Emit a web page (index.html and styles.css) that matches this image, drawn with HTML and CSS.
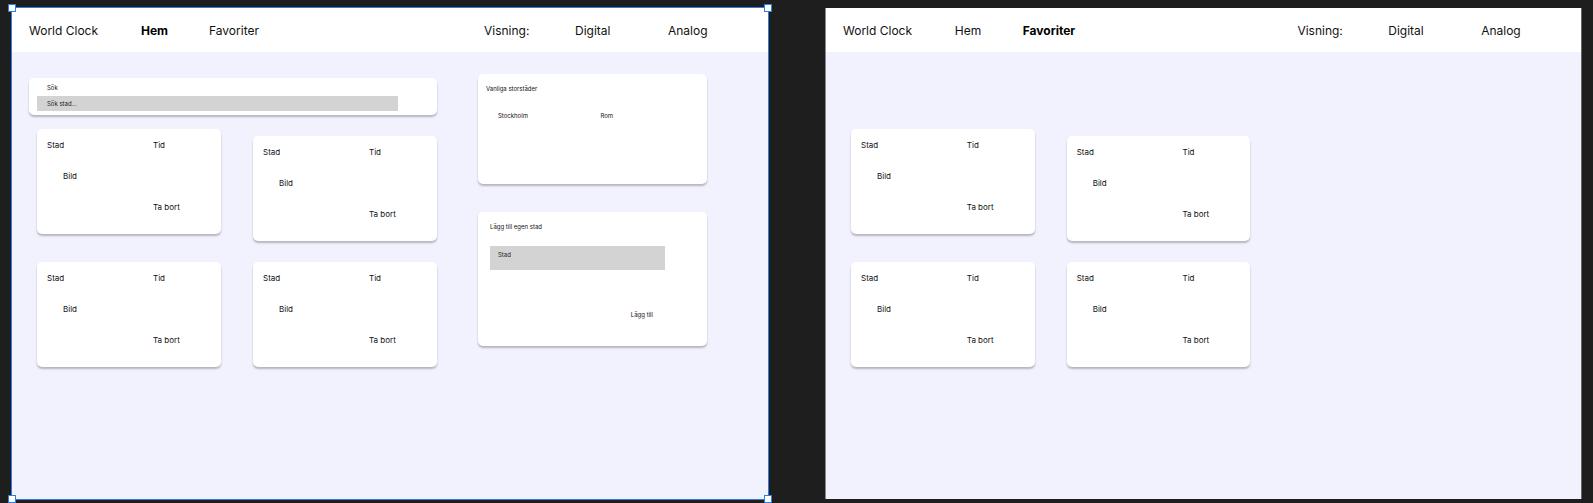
FILE: index.html
```html
<!DOCTYPE html>
<html lang="sv">
<head>
<meta charset="utf-8">
<title>World Clock</title>
<link rel="stylesheet" href="styles.css">
</head>
<body class="canvas">
  <section class="frame frame-selected" aria-label="Hem">
    <header class="topbar">
      <span class="brand">World Clock</span>
      <a class="nav-link active" href="#hem">Hem</a>
      <a class="nav-link" href="#favoriter">Favoriter</a>
      <span class="view-label">Visning:</span>
      <button class="view-button" type="button">Digital</button>
      <button class="view-button" type="button">Analog</button>
    </header>
    <main class="content">
      <div class="column">
        <form class="search surface">
          <label class="search-label" for="search">Sök</label>
          <input class="search-input" id="search" type="text" placeholder="Sök stad...">
        </form>
        <div class="cards">
          <article class="card surface"><span>Stad</span><span>Tid</span><span class="picture">Bild</span><button class="remove" type="button">Ta bort</button></article>
          <article class="card surface"><span>Stad</span><span>Tid</span><span class="picture">Bild</span><button class="remove" type="button">Ta bort</button></article>
          <article class="card surface"><span>Stad</span><span>Tid</span><span class="picture">Bild</span><button class="remove" type="button">Ta bort</button></article>
          <article class="card surface"><span>Stad</span><span>Tid</span><span class="picture">Bild</span><button class="remove" type="button">Ta bort</button></article>
        </div>
      </div>
      <aside class="sidebar">
        <section class="cities surface">
          <h2 class="panel-title">Vanliga storstäder</h2>
          <div class="city-list"><span>Stockholm</span><span>Rom</span></div>
        </section>
        <form class="add-city surface">
          <label class="panel-title" for="city">Lägg till egen stad</label>
          <input class="city-input" id="city" type="text" placeholder="Stad">
          <button class="add-button" type="button">Lägg till</button>
        </form>
      </aside>
    </main>
    <i class="handle top left"></i>
    <i class="handle top right"></i>
    <i class="handle bottom left"></i>
    <i class="handle bottom right"></i>
  </section>

  <section class="frame frame-plain" aria-label="Favoriter">
    <header class="topbar">
      <span class="brand">World Clock</span>
      <a class="nav-link" href="#hem">Hem</a>
      <a class="nav-link active" href="#favoriter">Favoriter</a>
      <span class="view-label">Visning:</span>
      <button class="view-button" type="button">Digital</button>
      <button class="view-button" type="button">Analog</button>
    </header>
    <main class="content favorites">
      <div class="column">
        <div class="cards">
          <article class="card surface"><span>Stad</span><span>Tid</span><span class="picture">Bild</span><button class="remove" type="button">Ta bort</button></article>
          <article class="card surface"><span>Stad</span><span>Tid</span><span class="picture">Bild</span><button class="remove" type="button">Ta bort</button></article>
          <article class="card surface"><span>Stad</span><span>Tid</span><span class="picture">Bild</span><button class="remove" type="button">Ta bort</button></article>
          <article class="card surface"><span>Stad</span><span>Tid</span><span class="picture">Bild</span><button class="remove" type="button">Ta bort</button></article>
        </div>
      </div>
    </main>
  </section>
</body>
</html>
```

FILE: styles.css
```css
* {
  box-sizing: border-box;
}

.canvas {
  display: grid;
  grid-template-columns: minmax(0, 1fr) minmax(0, 1fr);
  column-gap: 57px;
  min-height: 100vh;
  margin: 0;
  padding: 8px 12px 4px;
  background: #1e1e1e;
  color: #111;
  font-family: Inter, "Liberation Sans", sans-serif;
  font-size: 8px;
  line-height: 10px;
}

button,
input {
  margin: 0;
  padding: 0;
  border: 0;
  border-radius: 0;
  background: none;
  color: inherit;
  font: inherit;
  text-align: left;
}

button {
  justify-self: start;
  cursor: pointer;
}

input::placeholder {
  color: #222;
  opacity: 1;
}

.frame {
  position: relative;
  background: #f2f2fe;
}

.frame-selected {
  box-shadow: 0 0 0 1px #2f7de1;
}

.frame-plain {
  border-left: 1px solid #8a8a8c;
  box-shadow: 1px 0 #666;
}

/* Selection handles on the frame corners */
.handle {
  position: absolute;
  width: 8px;
  height: 8px;
  border: 1px solid #2f7de1;
  background: #fff;
}

.top { top: -4px; }
.bottom { bottom: -4px; }
.left { left: -4px; }
.right { right: -4px; }

.topbar {
  display: grid;
  grid-template-columns: 112fr 68fr 275fr 91fr 93fr 100fr;
  align-items: center;
  height: 44px;
  padding: 2px 0 0 17px;
  background: #fff;
  font-size: 12px;
  line-height: 16px;
}

.topbar > * {
  min-width: 0;
  white-space: nowrap;
}

.nav-link {
  color: inherit;
  text-decoration: none;
}

.active {
  color: #000;
  font-weight: 700;
}

.surface {
  border-radius: 5px;
  background: #fff;
  box-shadow: 0 2px 2px rgba(0, 0, 0, 0.25);
}

.content {
  display: grid;
  grid-template-columns: minmax(0, 408fr) minmax(0, 229fr);
  column-gap: 41px;
  align-items: start;
  padding: 22px 61px 22px 17px;
}

.column {
  padding-top: 4px;
}

.favorites .column {
  padding-top: 55px;
}

.search {
  display: flex;
  flex-direction: column;
  align-items: flex-start;
  margin-bottom: 14px;
  padding: 5px 39px 4px 8px;
  font-size: 6px;
}

.search-label {
  padding: 0 10px 3px;
}

.search-input {
  width: 100%;
  height: 15px;
  padding: 0 10px;
  background: #d3d3d3;
}

.cards {
  display: grid;
  grid-template-columns: 1fr 1fr;
  gap: 21px 32px;
  align-items: start;
  padding-left: 8px;
}

.card {
  display: grid;
  grid-template-columns: 106fr 68fr;
  grid-auto-rows: 10px;
  row-gap: 21px;
  min-height: 105px;
  padding: 11px 0 10px 10px;
}

.card:nth-child(2) {
  margin-top: 7px;
}

.picture {
  grid-column: 1;
  padding-left: 16px;
}

.remove {
  grid-row: 3;
  grid-column: 2;
}

.sidebar {
  display: grid;
  row-gap: 28px;
  font-size: 6px;
}

.cities {
  min-height: 110px;
  padding: 10px 8px;
}

.panel-title {
  margin: 0;
  font-size: 6px;
  font-weight: 400;
}

.city-list {
  display: grid;
  grid-template-columns: 102fr 98fr;
  margin-top: 17px;
  padding-left: 12px;
}

.add-city {
  display: grid;
  align-content: start;
  min-height: 134px;
  padding: 10px 42px 20px 12px;
}

.city-input {
  width: 100%;
  height: 24px;
  margin: 14px 0 40px;
  padding: 3px 8px 11px;
  background: #d3d3d3;
}

.add-button {
  justify-self: end;
  margin-right: 12px;
}
```
